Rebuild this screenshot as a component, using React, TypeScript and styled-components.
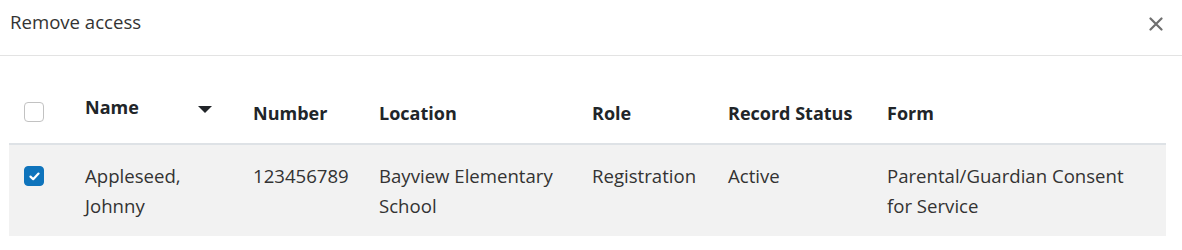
import styled, { createGlobalStyle } from 'styled-components';

const GlobalStyle = createGlobalStyle`
	body {
		margin: 0;
		background: #ffffff;
		font-family: 'Open Sans', 'Noto Sans', sans-serif;
		color: #333333;
	}
`;

type Row = {
	id: number;
	name: string;
	number: string;
	location: string;
	role: string;
	status: string;
	form: string;
	checked: boolean;
};

const rows: Row[] = [
	{
		id: 1,
		name: 'Appleseed, Johnny',
		number: '123456789',
		location: 'Bayview Elementary School',
		role: 'Registration',
		status: 'Active',
		form: 'Parental/Guardian Consent for Service',
		checked: true,
	},
];

const columns = [
	{ key: 'number', label: 'Number', width: 126 },
	{ key: 'location', label: 'Location', width: 213 },
	{ key: 'role', label: 'Role', width: 136 },
	{ key: 'status', label: 'Record Status', width: 159 },
	{ key: 'form', label: 'Form', width: 294 },
] as const;

const Checkbox = ({ checked }: { checked?: boolean }) => (
	<Box $checked={!!checked}>
		{checked && (
			<svg width="11" height="9" viewBox="0 0 11 9">
				<path d="M1.5 4.6 L4.2 7.2 L9.5 1.6" fill="none" stroke="#ffffff" strokeWidth="2.2" strokeLinecap="round" strokeLinejoin="round" />
			</svg>
		)}
	</Box>
);

const App = () => {
	return (
		<Modal>
			<GlobalStyle />
			<Header>
				<Title>Remove access</Title>
				<CloseButton aria-label="Close">
					<svg width="14" height="14" viewBox="0 0 14 14">
						<path d="M1.5 1.5 L12.5 12.5 M12.5 1.5 L1.5 12.5" stroke="#6f6f6f" strokeWidth="2.2" strokeLinecap="round" />
					</svg>
				</CloseButton>
			</Header>

			<Body>
				<Table>
					<thead>
						<tr>
							<Th $w={61}>
								<Checkbox />
							</Th>
							<Th $w={168}>
								<SortHead>
									<span>Name</span>
									<SortArrow />
								</SortHead>
							</Th>
							{columns.map((col) => (
								<Th key={col.key} $w={col.width}>
									{col.label}
								</Th>
							))}
						</tr>
					</thead>
					<tbody>
						{rows.map((row) => (
							<BodyRow key={row.id} $selected={row.checked}>
								<Td>
									<Checkbox checked={row.checked} />
								</Td>
								<Td>{row.name}</Td>
								{columns.map((col) => (
									<Td key={col.key}>{row[col.key]}</Td>
								))}
							</BodyRow>
						))}
					</tbody>
				</Table>
			</Body>
		</Modal>
	);
};
export default App;

const Modal = styled.div`
	width: 1182px;
	background: #ffffff;
`;

const Header = styled.div`
	height: 56px;
	display: flex;
	align-items: flex-start;
	justify-content: space-between;
	padding: 7px 19px 0 10px;
	box-sizing: border-box;
	border-bottom: 1px solid #e3e3e3;
`;

const Title = styled.h5`
	margin: 0;
	font-size: 18.6px;
	line-height: 30px;
	font-weight: 400;
	color: #333333;
`;

const CloseButton = styled.button`
	border: none;
	background: transparent;
	padding: 0;
	margin-top: 10px;
	width: 14px;
	height: 14px;
	display: flex;
	cursor: pointer;
`;

const Body = styled.div`
	padding: 21px 16px 0 9px;
`;

const Table = styled.table`
	width: 1157px;
	table-layout: fixed;
	border-collapse: collapse;
	font-size: 18.6px;
	line-height: 30px;
`;

const Th = styled.th<{ $w: number }>`
	width: ${({ $w }) => $w}px;
	padding: 15px 15px 15px;
	text-align: left;
	vertical-align: bottom;
	white-space: nowrap;
	font-size: 18px;
	font-weight: 700;
	color: #212529;
	border-bottom: 2px solid #dee2e6;
	box-sizing: border-box;
`;

const SortHead = styled.div`
	display: flex;
	align-items: center;
	padding-bottom: 6px;
`;

const SortArrow = styled.span`
	width: 0;
	height: 0;
	margin: 4px 11px 0 auto;
	border-left: 7.5px solid transparent;
	border-right: 7.5px solid transparent;
	border-top: 7px solid #212529;
`;

const BodyRow = styled.tr<{ $selected: boolean }>`
	background: ${({ $selected }) => ($selected ? '#f2f2f2' : '#ffffff')};
`;

const Td = styled.td`
	padding: 16px 15px 15px;
	vertical-align: top;
	color: #333333;
`;

const Box = styled.span<{ $checked: boolean }>`
	display: flex;
	align-items: center;
	justify-content: center;
	width: 20px;
	height: 20px;
	box-sizing: border-box;
	border-radius: 4px;
	margin: ${({ $checked }) => ($checked ? '5px 0 0' : '0 0 6px')};
	border: 1px solid ${({ $checked }) => ($checked ? '#0f74bc' : '#c2c2c2')};
	background: ${({ $checked }) => ($checked ? '#0f74bc' : '#ffffff')};
`;
